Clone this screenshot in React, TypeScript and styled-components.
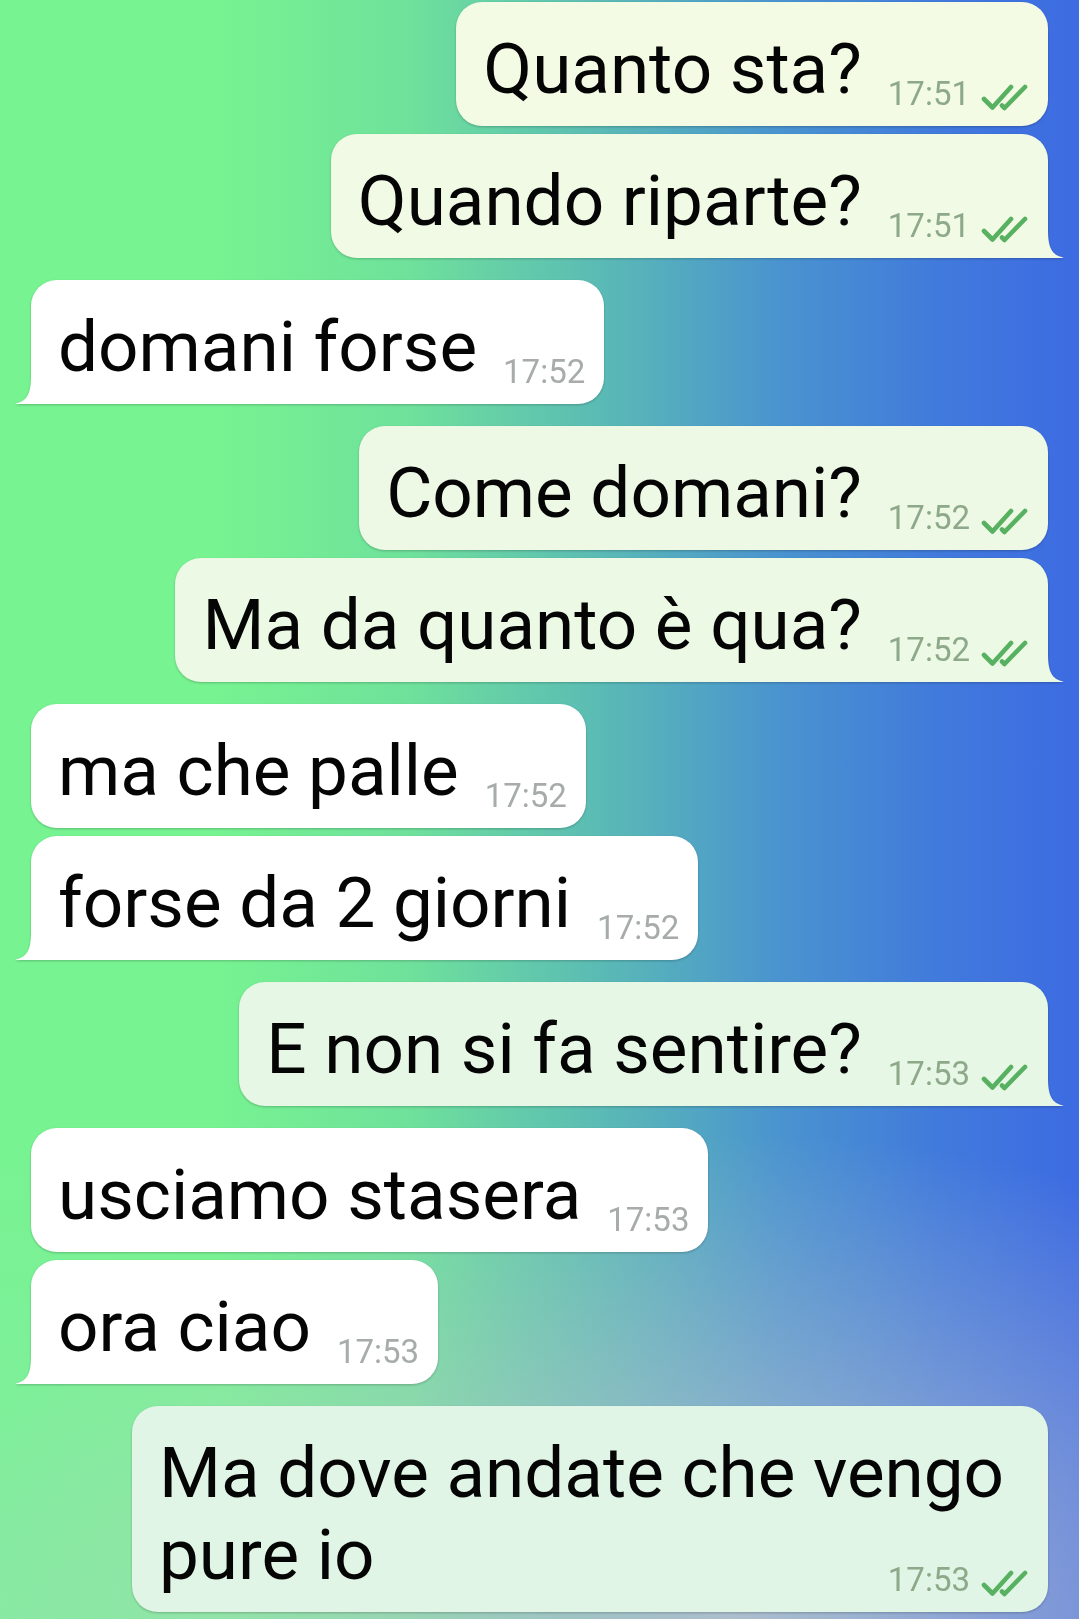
import React from 'react';
import styled, { createGlobalStyle } from 'styled-components';

const GlobalStyle = createGlobalStyle`
	html, body {
		margin: 0;
		height: 100%;
		overflow: hidden;
	}
	body {
		font-family: Roboto, 'Noto Sans', 'Liberation Sans', sans-serif;
		background:
			radial-gradient(ellipse 75% 30% at 68% 100%, rgba(196, 198, 206, 0.8), rgba(196, 198, 206, 0) 100%),
			radial-gradient(ellipse 40% 30% at 0% 100%, rgba(140, 232, 170, 0.6), rgba(140, 232, 170, 0) 100%),
			linear-gradient(to right, #77f391 0%, #77f391 20%, #6fe19b 38%, #5bbcb4 55%, #4a94cf 72%, #417adc 87%, #3d6be2 100%);
	}
`;

const Chat = styled.div`
	display: flex;
	flex-direction: column;
	padding: 2px 31px 0 31px;
`;

const Bubble = styled.div<{ $out: boolean; $tail: boolean; $gap: number; $bg: string }>`
	position: relative;
	display: flow-root;
	box-sizing: border-box;
	width: fit-content;
	max-width: 916px;
	margin-top: ${(p) => p.$gap}px;
	padding: 26px 19px 16px 27px;
	align-self: ${(p) => (p.$out ? 'flex-end' : 'flex-start')};
	background: ${(p) => p.$bg};
	border-radius: 26px;
	${(p) => p.$tail && (p.$out ? 'border-bottom-right-radius: 0;' : 'border-bottom-left-radius: 0;')}
	filter: drop-shadow(0 1.5px 1px rgba(0, 0, 0, 0.22));

	&::after {
		content: '';
		display: ${(p) => (p.$tail ? 'block' : 'none')};
		position: absolute;
		bottom: 0;
		width: 17px;
		height: 28px;
		background: inherit;
		${(p) =>
			p.$out
				? `right: -16px;
		clip-path: path('M0 0 L1 0 C1 18 5 25 16 27.4 Q17 28 15 28 L0 28 Z');`
				: `left: -16px;
		clip-path: path('M17 0 L16 0 C16 18 12 25 1 27.4 Q0 28 2 28 L17 28 Z');`}
	}
`;

const Text = styled.span`
	font-size: 71px;
	line-height: 82px;
	color: #050505;
`;

const Meta = styled.span<{ $out: boolean }>`
	float: right;
	display: flex;
	align-items: flex-end;
	gap: 11px;
	margin: 51px 0 0 26px;
	font-size: 33px;
	line-height: 30px;
	color: ${(p) => (p.$out ? '#8ea98a' : '#a7abaa')};
`;

const Ticks = styled.svg`
	display: block;
	width: 48px;
	height: 27px;
	margin-bottom: -2px;
`;

const DoubleTick = () => (
	<Ticks viewBox="0 0 48 27" fill="none" stroke="#58b160" strokeWidth="4.6" strokeLinecap="round" strokeLinejoin="round">
		<path d="M3 15 L11.5 23.5 L30 3" />
		<path d="M21 21.5 L23.5 24 L44 3" />
	</Ticks>
);

type Msg = { out: boolean; text: string; time: string; tail: boolean };

const messages: Msg[] = [
	{ out: true, text: 'Quanto sta?', time: '17:51', tail: false },
	{ out: true, text: 'Quando riparte?', time: '17:51', tail: true },
	{ out: false, text: 'domani forse', time: '17:52', tail: true },
	{ out: true, text: 'Come domani?', time: '17:52', tail: false },
	{ out: true, text: 'Ma da quanto è qua?', time: '17:52', tail: true },
	{ out: false, text: 'ma che palle', time: '17:52', tail: false },
	{ out: false, text: 'forse da 2 giorni', time: '17:52', tail: true },
	{ out: true, text: 'E non si fa sentire?', time: '17:53', tail: true },
	{ out: false, text: 'usciamo stasera', time: '17:53', tail: false },
	{ out: false, text: 'ora ciao', time: '17:53', tail: true },
	{ out: true, text: 'Ma dove andate che vengo pure io', time: '17:53', tail: false },
];

// outgoing bubbles drift from a pale yellow-green at the top to mint at the bottom
const outTone = (index: number) => {
	const f = index / (messages.length - 1);
	const from = [243, 251, 229];
	const to = [224, 245, 230];
	const c = from.map((v, i) => Math.round(v + (to[i] - v) * f));
	return `rgb(${c.join(',')})`;
};

export default function App() {
	return (
		<>
			<GlobalStyle />
			<Chat>
				{messages.map((m, i) => {
					const prev = messages[i - 1];
					const gap = i === 0 ? 0 : prev.out === m.out ? 8 : 22;
					return (
						<Bubble key={i} $out={m.out} $tail={m.tail} $gap={gap} $bg={m.out ? outTone(i) : '#ffffff'}>
							<Text>{m.text}</Text>
							<Meta $out={m.out}>
								{m.time}
								{m.out && <DoubleTick />}
							</Meta>
						</Bubble>
					);
				})}
			</Chat>
		</>
	);
}
